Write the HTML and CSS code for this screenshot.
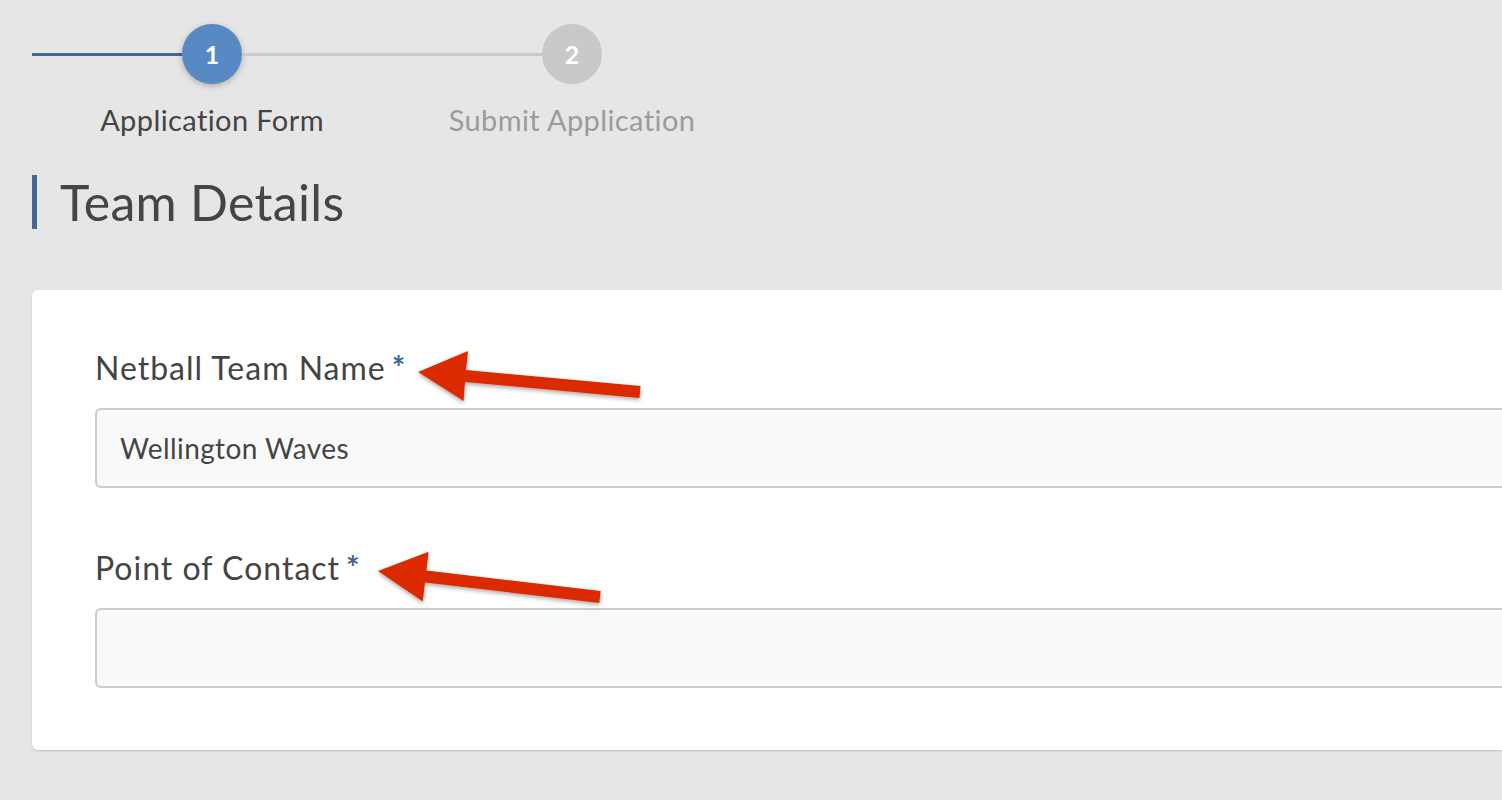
FILE: index.html
```html
<!DOCTYPE html>
<html lang="en">
<head>
<meta charset="utf-8">
<title>Team Details</title>
<link rel="stylesheet" href="styles.css">
</head>
<body>
<div class="page">
  <div class="stepper">
    <div class="line line-done"></div>
    <div class="circle circle-active">1</div>
    <div class="line line-todo"></div>
    <div class="circle circle-todo">2</div>
    <div class="spacer"></div>
    <div class="step-label label-active"><span>Application Form</span></div>
    <div class="spacer"></div>
    <div class="step-label label-todo"><span>Submit Application</span></div>
  </div>

  <h1 class="section-title">Team Details</h1>

  <div class="card">
    <div class="field">
      <label class="field-label">Netball Team Name<span class="req">*</span></label>
      <div class="input">Wellington Waves</div>
    </div>
    <div class="field">
      <label class="field-label">Point of Contact<span class="req">*</span></label>
      <div class="input"></div>
    </div>
  </div>

  <svg class="annotations" width="1502" height="800" viewBox="0 0 1502 800" xmlns="http://www.w3.org/2000/svg">
    <defs>
      <filter id="sh" x="-20%" y="-50%" width="140%" height="200%">
        <feDropShadow dx="0" dy="2" stdDeviation="2" flood-color="#000" flood-opacity="0.35"/>
      </filter>
    </defs>
    <polygon filter="url(#sh)" fill="#dc2b04" points="418,372 468,351 466,370 640.5,386 639.5,398 465,382 463.6,401"/>
    <polygon filter="url(#sh)" fill="#dc2b04" points="378,571 428.6,551.8 426.4,570.6 600.7,591 599.3,603 425,582.6 422.8,601.4"/>
  </svg>
</div>
</body>
</html>
```

FILE: styles.css
```css
html, body {
  margin: 0;
  padding: 0;
  background: #e6e6e6;
  font-family: Lato, "Open Sans", sans-serif;
  color: #444;
  overflow: hidden;
}

.page {
  position: relative;
  width: 1502px;
  height: 800px;
  padding: 24px 0 0 32px;
  box-sizing: border-box;
}

.stepper {
  display: grid;
  grid-template-columns: 150px 60px 300px 60px;
  grid-template-rows: 60px auto;
  align-items: center;
}

.line {
  height: 3px;
}
.line-done { background: #46668f; }
.line-todo { background: #cbcbcb; }

.circle {
  width: 60px;
  height: 60px;
  border-radius: 50%;
  display: flex;
  align-items: center;
  justify-content: center;
  color: #fff;
  font-size: 25px;
  font-weight: 700;
}
.circle-active {
  background: #578ac4;
  box-shadow: 0 2px 6px rgba(0,0,0,0.25);
}
.circle-todo {
  background: #c9c9c9;
}

.step-label {
  display: flex;
  justify-content: center;
  white-space: nowrap;
  font-size: 29px;
  letter-spacing: 0.4px;
  line-height: 34px;
  margin-top: 19px;
}
.label-active { color: #444; }
.label-todo { color: #9b9b9b; }

.section-title {
  margin: 38px 0 0 0;
  border-left: 5px solid #46668f;
  padding-left: 23px;
  font-size: 50px;
  letter-spacing: 0.3px;
  font-weight: 400;
  line-height: 54px;
  color: #454545;
}

.card {
  margin-top: 61px;
  background: #fff;
  border-radius: 6px 0 0 6px;
  box-shadow: 0 1px 2px rgba(0,0,0,0.18);
  padding: 58px 0 62px 63px;
  display: flex;
  flex-direction: column;
  gap: 60px;
}

.field {
  display: flex;
  flex-direction: column;
  gap: 20px;
}

.field-label {
  font-size: 32px;
  letter-spacing: 1px;
  line-height: 40px;
  color: #444;
}
.req {
  color: #3e6594;
  font-weight: 700;
  margin-left: 6px;
}

.input {
  height: 76px;
  border: 2px solid #cbcbcb;
  border-right: none;
  border-radius: 6px 0 0 6px;
  background: #f9f9f9;
  display: flex;
  align-items: center;
  padding-left: 23px;
  font-size: 28px;
  letter-spacing: 0.4px;
  color: #444;
}

.annotations {
  position: absolute;
  left: 0;
  top: 0;
  pointer-events: none;
}
```
